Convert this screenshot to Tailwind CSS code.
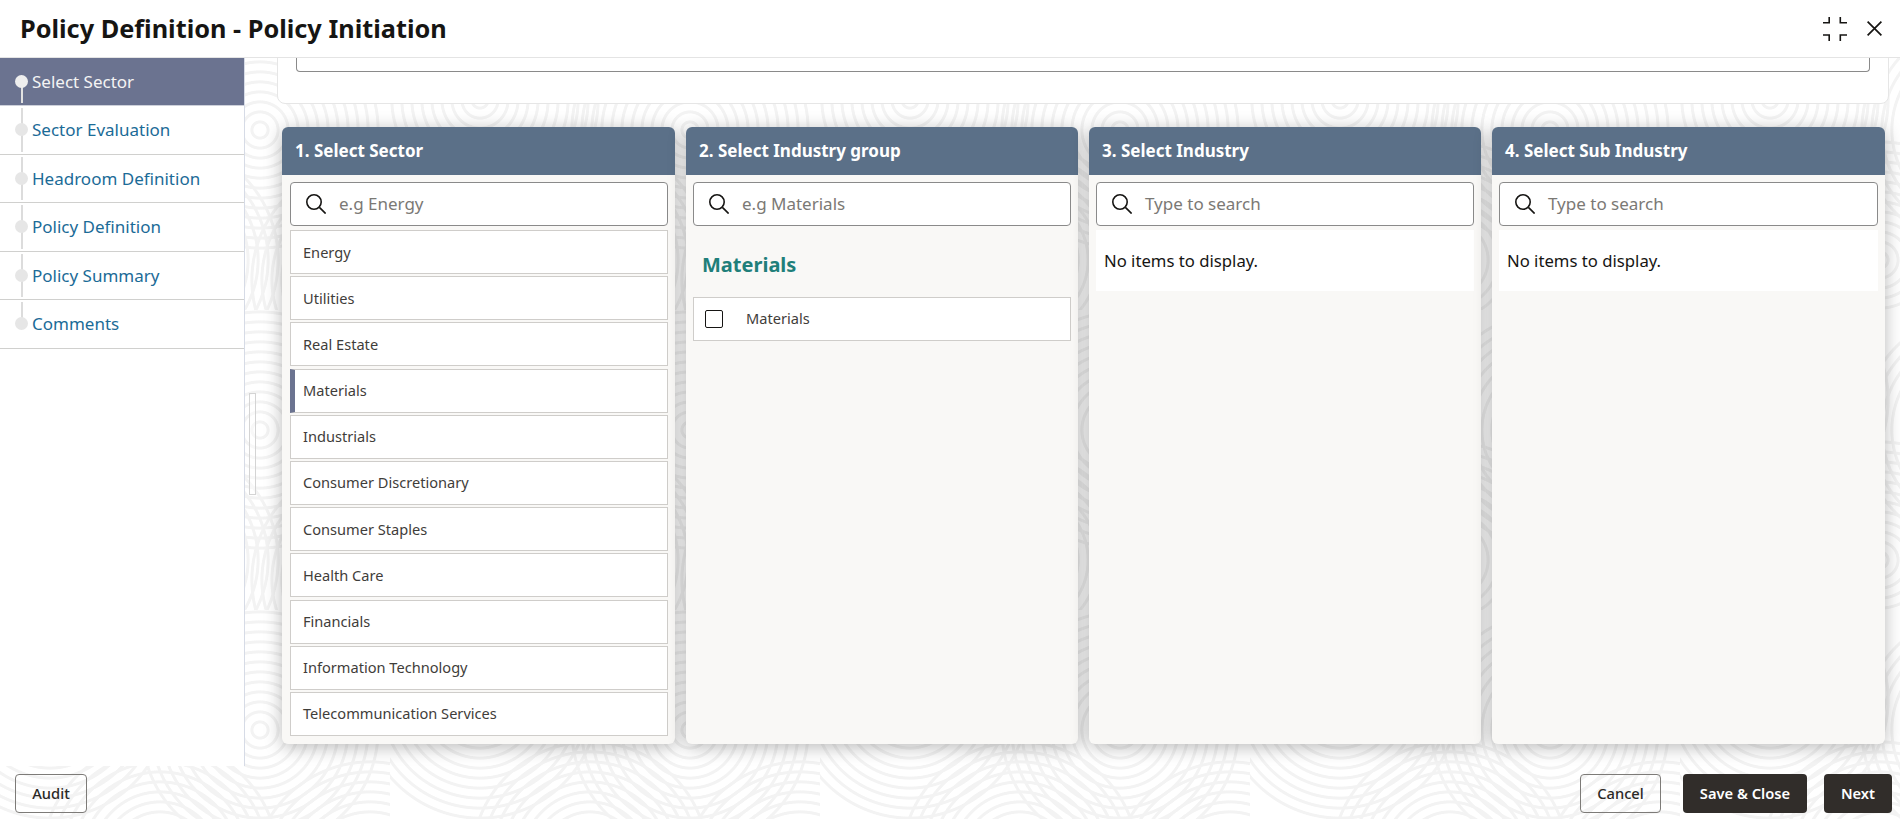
<!DOCTYPE html>
<html lang="en">
  <head>
    <meta charset="UTF-8" />
    <meta name="viewport" content="width=device-width, initial-scale=1.0" />
    <title>Policy Definition - Policy Initiation</title>
    <script src="https://cdn.jsdelivr.net/npm/@tailwindcss/browser@4"></script>
  </head>
  <body class="font-['Noto_Sans',sans-serif]">
    <div class="relative h-screen overflow-hidden flex flex-col bg-white">
      <!-- page background swirls -->
      <svg class="absolute inset-0 w-full h-full" aria-hidden="true">
        <defs>
          <radialGradient id="rings" cx="0.5" cy="0.5" r="0.04" spreadMethod="repeat">
            <stop offset="0" stop-color="#f3f3f3" stop-opacity="0" />
            <stop offset="0.62" stop-color="#f3f3f3" stop-opacity="0" />
            <stop offset="0.7" stop-color="#f3f3f3" />
            <stop offset="0.92" stop-color="#f3f3f3" />
            <stop offset="1" stop-color="#f3f3f3" stop-opacity="0" />
          </radialGradient>
          <pattern id="swirls" width="430" height="300" patternUnits="userSpaceOnUse" x="-40" y="10">
            <circle cx="90" cy="90" r="125" fill="url(#rings)" />
            <circle cx="300" cy="120" r="125" fill="url(#rings)" />
            <circle cx="200" cy="250" r="125" fill="url(#rings)" />
            <circle cx="410" cy="270" r="125" fill="url(#rings)" />
          </pattern>
        </defs>
        <rect width="100%" height="100%" fill="url(#swirls)" />
      </svg>

      <!-- header -->
      <header class="relative z-10 h-[58px] shrink-0 bg-white border-b border-[#e4e4e4] flex items-center justify-between pl-[20px] pr-[18px]">
        <h1 class="text-[25.3px] font-bold text-[#161513]">Policy Definition - Policy Initiation</h1>
        <div class="flex items-center gap-[20px]">
          <svg width="24" height="24" viewBox="0 0 24 24" fill="none" stroke="#161513" stroke-width="1.6">
            <path d="M0 5.7H6.2V0M17.3 0V5.7H24M0 18H6.2V24M24 18H17.3V24" />
          </svg>
          <svg width="15" height="15" viewBox="0 0 15 15" fill="none" stroke="#161513" stroke-width="1.7">
            <path d="M0.6 0.6L14.4 14.4M14.4 0.6L0.6 14.4" />
          </svg>
        </div>
      </header>

      <div class="relative flex flex-1 min-h-0">
        <!-- train stops -->
        <nav class="w-[245px] shrink-0 bg-white border-r border-[#d6dbe6] text-[17px] text-[#1b6b97]">
          <div class="relative h-[48px] bg-[#6b7390] text-[#f4f4f4] flex items-center pl-[32px] border-b border-[#cdd0da]">
            <span class="absolute left-[21px] top-[24px] h-[21px] w-[2px] bg-[#e2e2e2]"></span>
            <span class="absolute left-[15px] top-[17px] size-[13px] rounded-full bg-[#eeeeee]"></span>
            Select Sector
          </div>
          <div class="relative h-[48.6px] flex items-center pl-[32px] border-b border-[#d0d0ce]">
            <span class="absolute left-[21px] top-[2px] bottom-[2px] w-[2px] bg-[#dcdcdc]"></span>
            <span class="absolute left-[15px] top-[17px] size-[13px] rounded-full bg-[#e6e6e6]"></span>
            Sector Evaluation
          </div>
          <div class="relative h-[48.6px] flex items-center pl-[32px] border-b border-[#d0d0ce]">
            <span class="absolute left-[21px] top-[2px] bottom-[2px] w-[2px] bg-[#dcdcdc]"></span>
            <span class="absolute left-[15px] top-[17px] size-[13px] rounded-full bg-[#e6e6e6]"></span>
            Headroom Definition
          </div>
          <div class="relative h-[48.6px] flex items-center pl-[32px] border-b border-[#d0d0ce]">
            <span class="absolute left-[21px] top-[2px] bottom-[2px] w-[2px] bg-[#dcdcdc]"></span>
            <span class="absolute left-[15px] top-[17px] size-[13px] rounded-full bg-[#e6e6e6]"></span>
            Policy Definition
          </div>
          <div class="relative h-[48.6px] flex items-center pl-[32px] border-b border-[#d0d0ce]">
            <span class="absolute left-[21px] top-[2px] bottom-[2px] w-[2px] bg-[#dcdcdc]"></span>
            <span class="absolute left-[15px] top-[17px] size-[13px] rounded-full bg-[#e6e6e6]"></span>
            Policy Summary
          </div>
          <div class="relative h-[48.6px] flex items-center pl-[32px] border-b border-[#d0d0ce]">
            <span class="absolute left-[21px] top-[2px] h-[20px] w-[2px] bg-[#dcdcdc]"></span>
            <span class="absolute left-[15px] top-[17px] size-[13px] rounded-full bg-[#e6e6e6]"></span>
            Comments
          </div>
        </nav>

        <main class="relative flex-1 min-w-0 overflow-hidden">
          <!-- scroll thumb -->
          <div class="absolute left-[4px] top-[335px] w-[7px] h-[102px] border border-[#d4d4d4] bg-white/40"></div>

          <!-- card scrolled off under the header -->
          <div class="ml-[32px] mr-[11px] -mt-[20px] h-[66px] bg-white border border-[#e6e6e6] rounded-b-[8px] px-[18px]">
            <div class="h-[33px] border border-[#8a8a8a] border-t-0 rounded-b-[4px]"></div>
          </div>

          <div class="ml-[37px] w-[1603px] mt-[23px] grid grid-cols-[393px_392px_392px_393px] gap-[11px]">
            <!-- 1 -->
            <section class="h-[617px] bg-[#f9f8f6] rounded-[6px] shadow-[0_3px_18px_rgba(0,0,0,0.28)] overflow-hidden">
              <h2 class="h-[48px] bg-[#5b7088] text-white text-[17px] font-bold flex items-center pl-[13px]">1. Select Sector</h2>
              <div class="pt-[7px] pl-[8px] pr-[7px]">
                <div class="h-[44px] bg-white border border-[#8a8a8a] rounded-[4px] flex items-center pl-[15px]">
                  <svg width="20" height="20" viewBox="0 0 20 20" fill="none" stroke="#161513" stroke-width="1.6"><circle cx="8" cy="8" r="7.2" /><path d="M13.4 13.4L19.6 19.6" /></svg>
                  <span class="ml-[13px] text-[17px] text-[#7b7975]">e.g Energy</span>
                </div>
                <ul class="mt-[4px] flex flex-col gap-[2.2px] text-[14.6px] text-[#3f3d3a]">
                  <li class="h-[44px] bg-white border border-[#cfcdca] flex items-center pl-[12px] pt-[1px]">Energy</li>
                  <li class="h-[44px] bg-white border border-[#cfcdca] flex items-center pl-[12px] pt-[1px]">Utilities</li>
                  <li class="h-[44px] bg-white border border-[#cfcdca] flex items-center pl-[12px] pt-[1px]">Real Estate</li>
                  <li class="h-[44px] bg-white border border-[#cfcdca] border-l-[5px] border-l-[#6b7390] flex items-center pl-[8px] pt-[1px]">Materials</li>
                  <li class="h-[44px] bg-white border border-[#cfcdca] flex items-center pl-[12px] pt-[1px]">Industrials</li>
                  <li class="h-[44px] bg-white border border-[#cfcdca] flex items-center pl-[12px] pt-[1px]">Consumer Discretionary</li>
                  <li class="h-[44px] bg-white border border-[#cfcdca] flex items-center pl-[12px] pt-[1px]">Consumer Staples</li>
                  <li class="h-[44px] bg-white border border-[#cfcdca] flex items-center pl-[12px] pt-[1px]">Health Care</li>
                  <li class="h-[44px] bg-white border border-[#cfcdca] flex items-center pl-[12px] pt-[1px]">Financials</li>
                  <li class="h-[44px] bg-white border border-[#cfcdca] flex items-center pl-[12px] pt-[1px]">Information Technology</li>
                  <li class="h-[44px] bg-white border border-[#cfcdca] flex items-center pl-[12px] pt-[1px]">Telecommunication Services</li>
                </ul>
              </div>
            </section>

            <!-- 2 -->
            <section class="h-[617px] bg-[#f9f8f6] rounded-[6px] shadow-[0_3px_18px_rgba(0,0,0,0.28)] overflow-hidden">
              <h2 class="h-[48px] bg-[#5b7088] text-white text-[17px] font-bold flex items-center pl-[13px]">2. Select Industry group</h2>
              <div class="p-[7px] pb-0">
                <div class="h-[44px] bg-white border border-[#8a8a8a] rounded-[4px] flex items-center pl-[15px]">
                  <svg width="20" height="20" viewBox="0 0 20 20" fill="none" stroke="#161513" stroke-width="1.6"><circle cx="8" cy="8" r="7.2" /><path d="M13.4 13.4L19.6 19.6" /></svg>
                  <span class="ml-[13px] text-[17px] text-[#7b7975]">e.g Materials</span>
                </div>
                <h3 class="mt-[24px] pl-[9px] text-[20px] leading-[30px] font-bold text-[#1f7f7a]">Materials</h3>
                <div class="mt-[17px] h-[44px] bg-white border border-[#cfcdca] flex items-center pl-[11px] text-[14.6px] text-[#3f3d3a]">
                  <span class="size-[18px] rounded-[2px] border border-[#161513]"></span>
                  <span class="ml-[23px]">Materials</span>
                </div>
              </div>
            </section>

            <!-- 3 -->
            <section class="h-[617px] bg-[#f9f8f6] rounded-[6px] shadow-[0_3px_18px_rgba(0,0,0,0.28)] overflow-hidden">
              <h2 class="h-[48px] bg-[#5b7088] text-white text-[17px] font-bold flex items-center pl-[13px]">3. Select Industry</h2>
              <div class="p-[7px] pb-0">
                <div class="h-[44px] bg-white border border-[#8a8a8a] rounded-[4px] flex items-center pl-[15px]">
                  <svg width="20" height="20" viewBox="0 0 20 20" fill="none" stroke="#161513" stroke-width="1.6"><circle cx="8" cy="8" r="7.2" /><path d="M13.4 13.4L19.6 19.6" /></svg>
                  <span class="ml-[13px] text-[17px] text-[#7b7975]">Type to search</span>
                </div>
                <div class="mt-[4px] h-[61px] bg-white flex items-center pl-[8px] pt-[1px] text-[16.7px] text-[#161513]">No items to display.</div>
              </div>
            </section>

            <!-- 4 -->
            <section class="h-[617px] bg-[#f9f8f6] rounded-[6px] shadow-[0_3px_18px_rgba(0,0,0,0.28)] overflow-hidden">
              <h2 class="h-[48px] bg-[#5b7088] text-white text-[17px] font-bold flex items-center pl-[13px]">4. Select Sub Industry</h2>
              <div class="p-[7px] pb-0">
                <div class="h-[44px] bg-white border border-[#8a8a8a] rounded-[4px] flex items-center pl-[15px]">
                  <svg width="20" height="20" viewBox="0 0 20 20" fill="none" stroke="#161513" stroke-width="1.6"><circle cx="8" cy="8" r="7.2" /><path d="M13.4 13.4L19.6 19.6" /></svg>
                  <span class="ml-[13px] text-[17px] text-[#7b7975]">Type to search</span>
                </div>
                <div class="mt-[4px] h-[61px] bg-white flex items-center pl-[8px] pt-[1px] text-[16.7px] text-[#161513]">No items to display.</div>
              </div>
            </section>
          </div>
        </main>
      </div>

      <!-- footer -->
      <footer class="relative h-[53px] shrink-0 flex items-start justify-between pt-[8px] pl-[15px] pr-[8px] text-[14.7px]">
        <button class="w-[72px] h-[39px] border border-[#7d7b78] rounded-[4px] font-medium text-[#2b2926]">Audit</button>
        <div class="flex">
          <button class="w-[81px] h-[39px] border border-[#7d7b78] rounded-[4px] font-medium text-[#2b2926]">Cancel</button>
          <button class="ml-[22px] w-[124px] h-[39px] rounded-[4px] bg-[#312d2a] text-white font-semibold">Save &amp; Close</button>
          <button class="ml-[17px] w-[68px] h-[39px] rounded-[4px] bg-[#312d2a] text-white font-semibold">Next</button>
        </div>
      </footer>
    </div>
  </body>
</html>
